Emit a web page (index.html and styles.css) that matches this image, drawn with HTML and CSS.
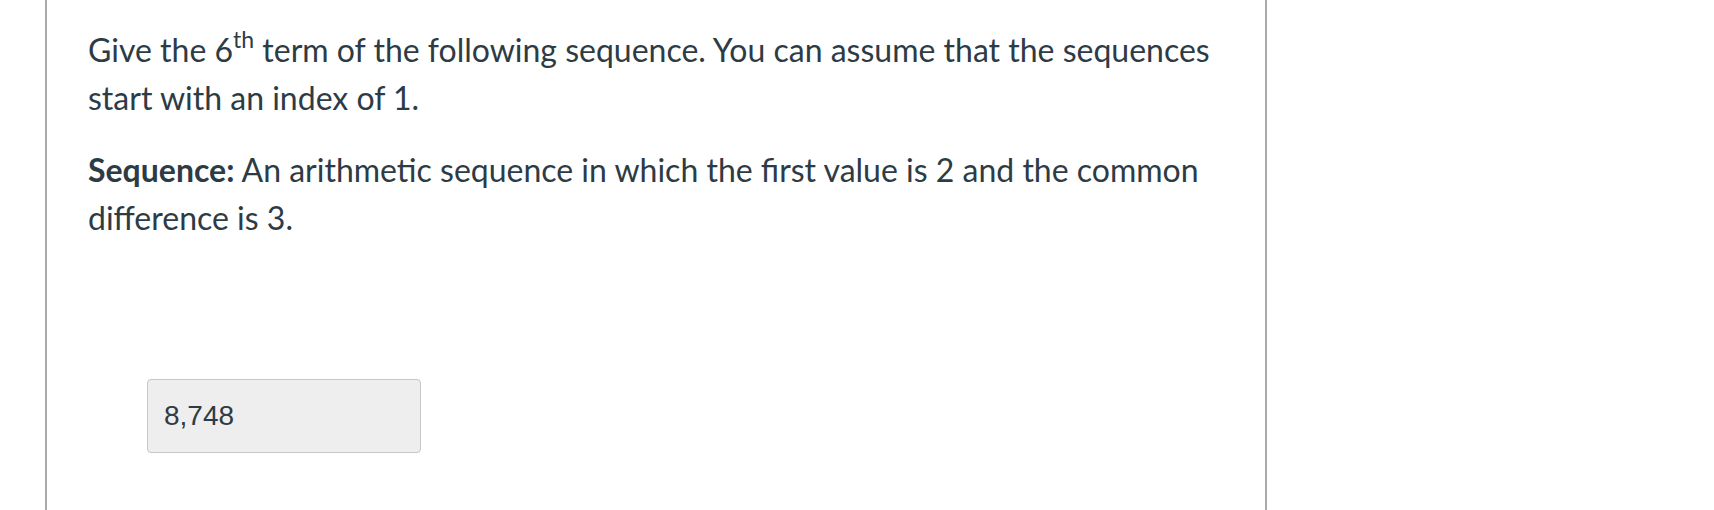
FILE: index.html
```html
<!DOCTYPE html>
<html>
<head>
<meta charset="utf-8">
<link rel="stylesheet" href="styles.css">
</head>
<body>
<div class="page">
  <div class="question">
    <div class="question-text">
      <p class="para">Give the 6<sup class="sup">th</sup> term of the following sequence. You can assume that the sequences start with an index of 1.</p>
      <p class="para para-second"><strong class="label">Sequence:</strong> An arithmetic sequence in which the first value is 2 and the common difference is 3.</p>
    </div>
    <div class="answer">
      <div class="answer-box">8,748</div>
    </div>
  </div>
</div>
</body>
</html>
```
FILE: styles.css
```css
html, body {
  margin: 0;
  padding: 0;
  background: #ffffff;
}

.page {
  height: 510px;
  padding-left: 45px;
  overflow: hidden;
}

.question {
  width: 1222px;
  height: 100%;
  box-sizing: border-box;
  border-left: 2px solid #a9a9a9;
  border-right: 2px solid #a9a9a9;
  padding: 26px 0 0 41px;
  color: #2d3b45;
  font-family: Lato, "Noto Sans", sans-serif;
}

.question-text {
  width: 1150px;
}

.para {
  margin: 0;
  font-size: 32px;
  line-height: 48px;
}

.para-second {
  margin-top: 24px;
}

.label {
  font-weight: 700;
}

.sup {
  font-size: 0.72em;
  line-height: 0;
  vertical-align: 0.62em;
}

.answer {
  padding: 137px 0 0 59px;
}

.answer-box {
  height: 72px;
  box-sizing: content-box;
  display: flex;
  align-items: center;
  padding: 0 0 0 16px;
  width: 256px;
  background: #eeeeee;
  border: 1px solid #c8c8c8;
  border-radius: 4px;
  font-family: "Liberation Sans", Arial, sans-serif;
  font-size: 28px;
  color: #2d3b45;
}
```
